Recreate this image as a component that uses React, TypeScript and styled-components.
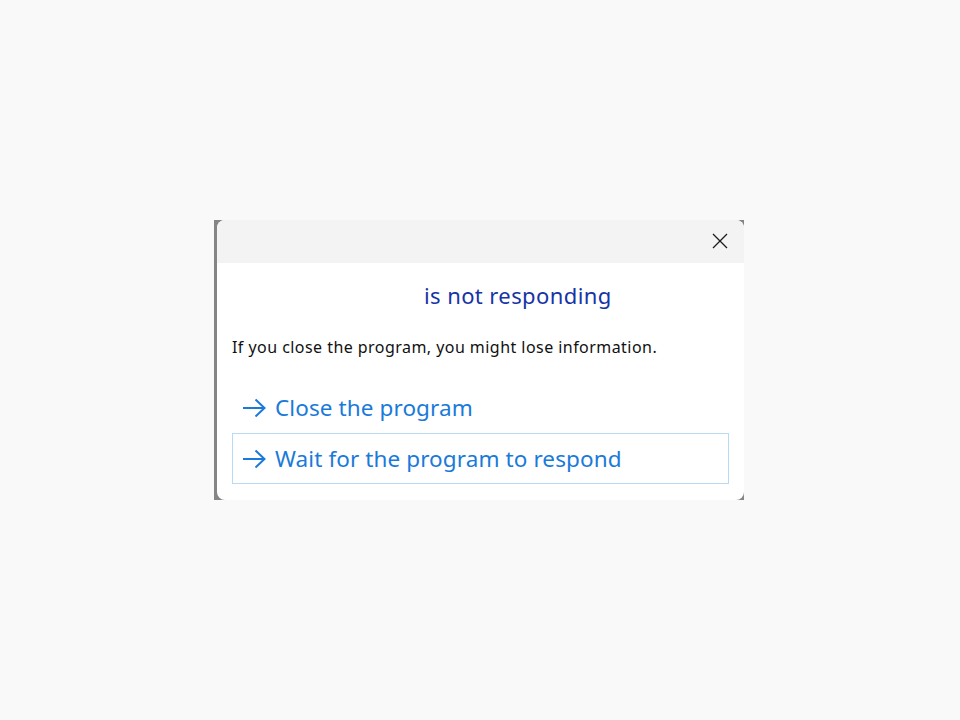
import React from "react";
import styled, { createGlobalStyle } from "styled-components";

const Global = createGlobalStyle`
  html, body { margin: 0; padding: 0; background: #f9f9f9; }
  body { font-family: "Noto Sans", "Liberation Sans", sans-serif; }
`;

const Page = styled.div`
  width: 960px;
  height: 720px;
  display: flex;
  align-items: flex-start;
  justify-content: flex-start;
  padding: 220px 0 0 214px;
  box-sizing: border-box;
`;

const Frame = styled.div`
  width: 530px;
  height: 280px;
  background: #858585;
  padding-left: 3px;
  box-sizing: border-box;
  display: flex;
`;

const Dialog = styled.div`
  flex: 1;
  background: #ffffff;
  border-radius: 8px;
  overflow: hidden;
  display: flex;
  flex-direction: column;
`;

const TitleBar = styled.div`
  height: 43px;
  background: #f3f3f3;
  display: flex;
  align-items: center;
  justify-content: flex-end;
  padding-right: 13px;
  padding-bottom: 2px;
  box-sizing: border-box;
`;

const CloseButton = styled.button`
  width: 22px;
  height: 22px;
  border: none;
  background: transparent;
  padding: 0;
  display: flex;
  align-items: center;
  justify-content: center;
  cursor: pointer;
`;

const Body = styled.div`
  padding: 16px 15px 0 15px;
  display: flex;
  flex-direction: column;
`;

const Heading = styled.div`
  color: #1634a6;
  font-size: 22px;
  letter-spacing: 0.4px;
  line-height: 32px;
  padding-left: 192px;
`;

const Message = styled.div`
  color: #111111;
  font-size: 16px;
  letter-spacing: 0.45px;
  line-height: 22px;
  margin-top: 25px;
`;

const Links = styled.div`
  margin-top: 24px;
  display: flex;
  flex-direction: column;
`;

const Link = styled.div<{ $focused?: boolean }>`
  height: 51px;
  box-sizing: border-box;
  border: 1px solid ${(p) => (p.$focused ? "#b9daf3" : "transparent")};
  display: flex;
  align-items: center;
  padding-left: 9px;
  gap: 9px;
  color: #1a7ad9;
  font-size: 22.5px;
  letter-spacing: 0.1px;
`;

const ArrowIcon = () => (
  <svg width="24" height="20" viewBox="0 0 24 20" fill="none">
    <path d="M1 10 H22.5 M13.5 1.5 L22.5 10 L13.5 18.5" stroke="#1a7ad9" strokeWidth="2" />
  </svg>
);

export default function App() {
  return (
    <>
      <Global />
      <Page>
        <Frame>
          <Dialog>
            <TitleBar>
              <CloseButton aria-label="Close">
                <svg width="16" height="16" viewBox="0 0 16 16">
                  <path d="M1 1 L15 15 M15 1 L1 15" stroke="#1b1b1b" strokeWidth="1.3" />
                </svg>
              </CloseButton>
            </TitleBar>
            <Body>
              <Heading>is not responding</Heading>
              <Message>If you close the program, you might lose information.</Message>
              <Links>
                <Link>
                  <ArrowIcon />
                  <span>Close the program</span>
                </Link>
                <Link $focused>
                  <ArrowIcon />
                  <span>Wait for the program to respond</span>
                </Link>
              </Links>
            </Body>
          </Dialog>
        </Frame>
      </Page>
    </>
  );
}
